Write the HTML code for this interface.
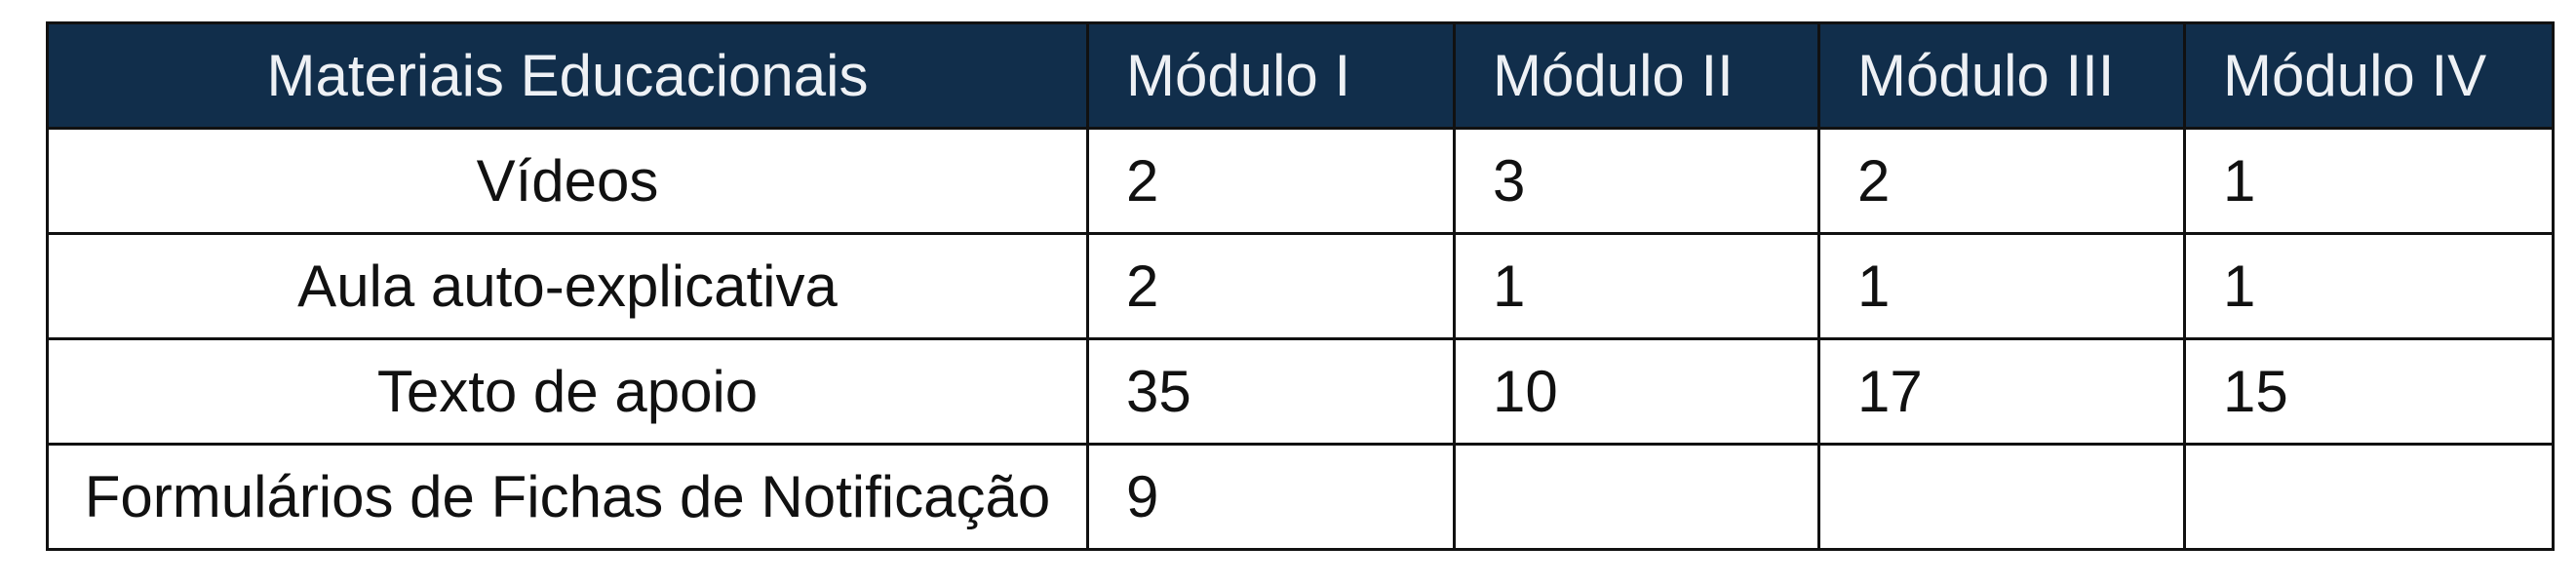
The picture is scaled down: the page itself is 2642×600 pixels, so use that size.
<!DOCTYPE html>
<html><head><meta charset="utf-8"><style>
html,body{margin:0;padding:0;background:#fff;width:2642px;height:600px;overflow:hidden}
table{position:absolute;left:47px;top:22px;border-collapse:collapse;font-family:"Liberation Sans",sans-serif;font-size:60px;color:#111}
td,th{border:3px solid #111;height:108px;padding:0 0 0 38px;text-align:left;font-weight:normal;white-space:nowrap;box-sizing:border-box}
th{background:#112e4b;color:#eef1f5}
.c{text-align:center;padding:0}
</style></head><body>
<table>
<colgroup><col style="width:1067px"><col style="width:376px"><col style="width:374px"><col style="width:375px"><col style="width:378px"></colgroup>
<tr><th class="c">Materiais Educacionais</th><th>Módulo I</th><th>Módulo II</th><th>Módulo III</th><th>Módulo IV</th></tr>
<tr><td class="c">Vídeos</td><td>2</td><td>3</td><td>2</td><td>1</td></tr>
<tr><td class="c">Aula auto-explicativa</td><td>2</td><td>1</td><td>1</td><td>1</td></tr>
<tr><td class="c">Texto de apoio</td><td>35</td><td>10</td><td>17</td><td>15</td></tr>
<tr><td class="c">Formulários de Fichas de Notificação</td><td>9</td><td></td><td></td><td></td></tr>
</table>
</body></html>
